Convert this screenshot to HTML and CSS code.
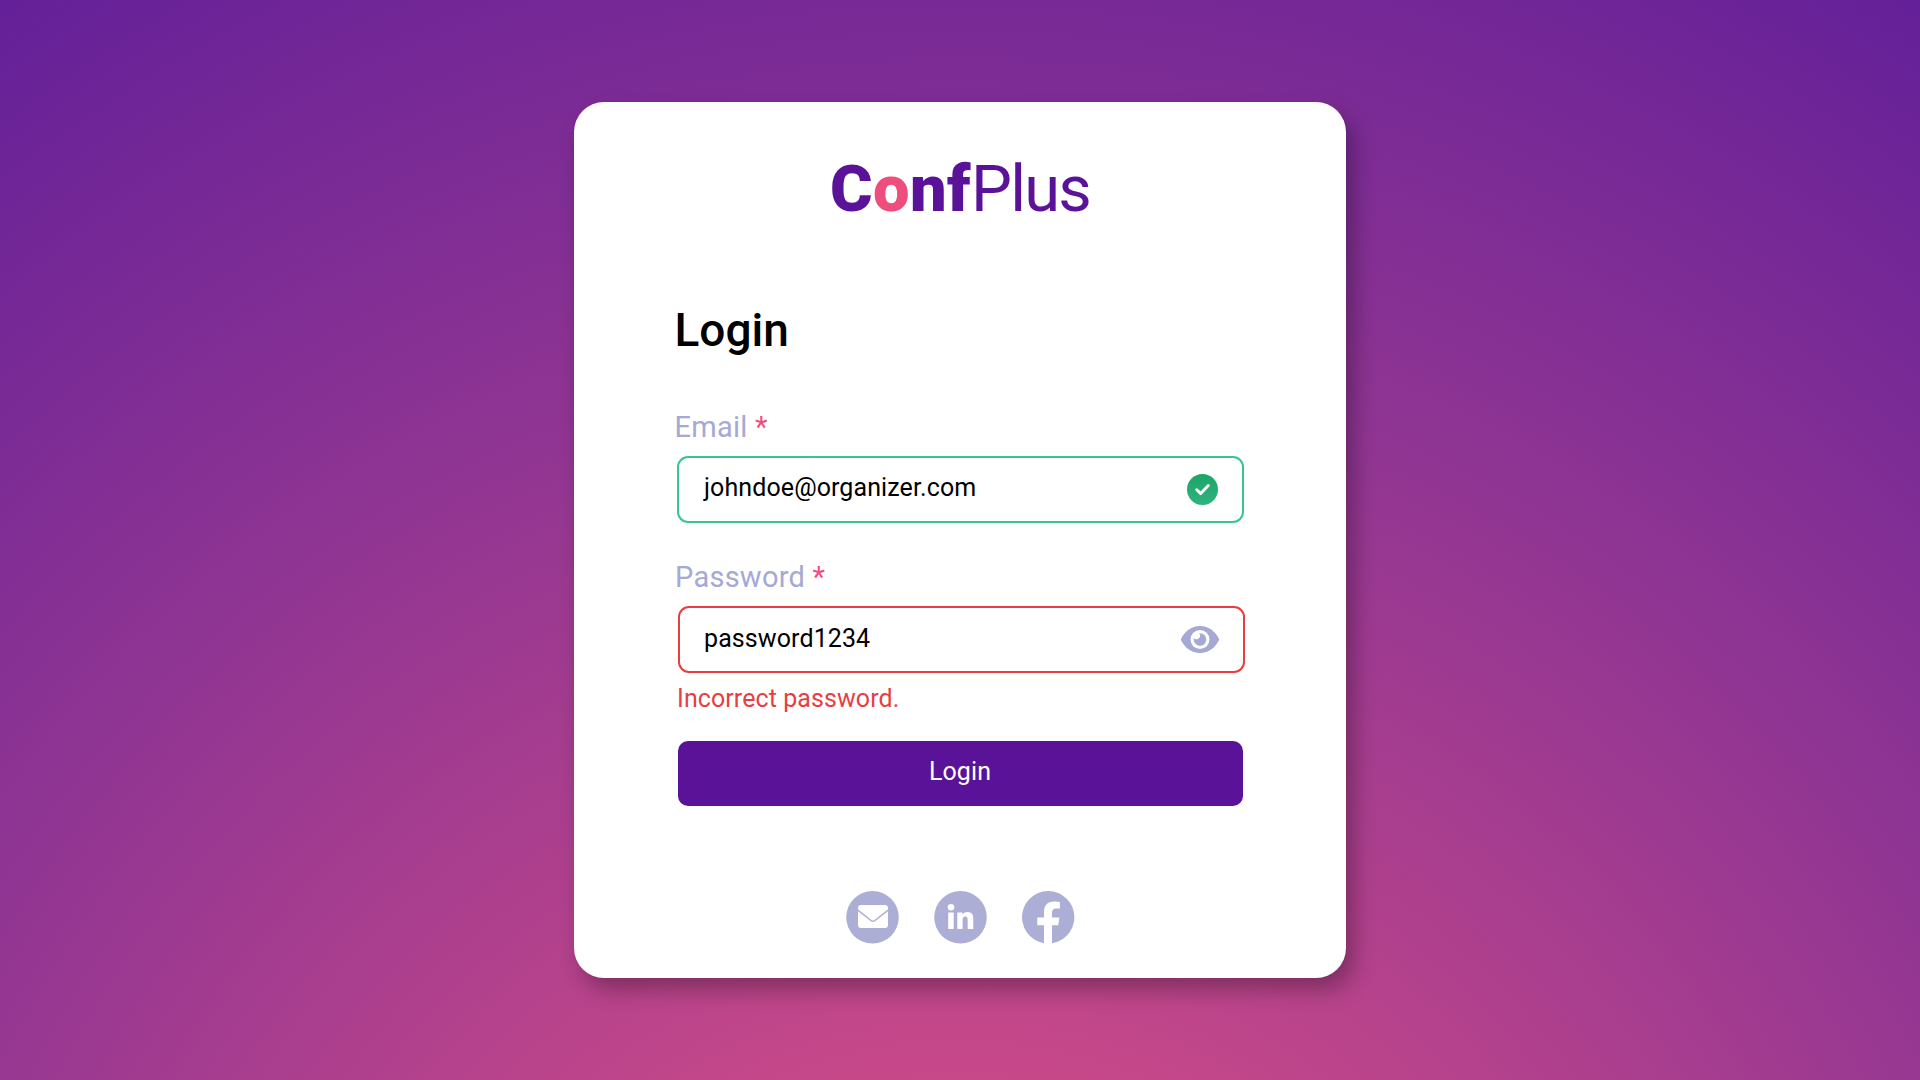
FILE: index.html
```html
<!DOCTYPE html>
<html lang="en">
<head>
<meta charset="utf-8">
<title>ConfPlus Login</title>
<link rel="stylesheet" href="styles.css">
</head>
<body>
<main class="card">
  <div class="logo"><span class="logo-bold">C<span class="logo-accent">o</span>nf</span><span class="logo-light">Plus</span></div>
  <form class="form">
    <h1 class="title">Login</h1>
    <label class="label">Email <span class="required">*</span></label>
    <div class="field field-valid">
      <span class="value value-email">johndoe@organizer.com</span>
      <svg class="icon-check" viewBox="0 0 31 31">
        <defs><linearGradient id="ok" x1="0" y1="0" x2="0" y2="1"><stop offset="0" stop-color="#1ba567"/><stop offset="1" stop-color="#2fb380"/></linearGradient></defs>
        <circle cx="15.5" cy="15.5" r="15.5" fill="url(#ok)"/>
        <path d="M9.700 15.800l4 3.800 7.600-8" fill="none" stroke="#fff" stroke-width="2.900" stroke-linecap="round" stroke-linejoin="round"/>
      </svg>
    </div>
    <label class="label label-password">Password <span class="required">*</span></label>
    <div class="field field-invalid">
      <span class="value value-password">password1234</span>
      <svg class="icon-eye" viewBox="0 0 38 27">
        <path d="M19 0C28 0 34.500 6 37.700 12.300Q38.300 13.500 37.700 14.700C34.500 21 28 27 19 27S3.500 21 .3 14.700Q-.3 13.500 .3 12.300C3.500 6 10 0 19 0Z" fill="#a5a9d3"/>
        <circle cx="19" cy="13.500" r="9.500" fill="#fff"/>
        <path d="M19 7.200a6.300 6.300 0 1 1-6.100 4.900 3.200 3.200 0 0 0 5.200-4.800q.4-.1.900-.1Z" fill="#a5a9d3"/>
      </svg>
    </div>
    <p class="error">Incorrect password.</p>
    <button class="submit" type="button">Login</button>
  </form>
  <nav class="socials">
    <svg class="social" viewBox="0 0 53 53">
      <circle cx="26.500" cy="26.300" r="26.300" fill="#acaed5"/>
      <path d="M12 18.300v-1.300q0-3 3-3h24q3 0 3 3v1.300L28.500 29q-1.500 1-3 0Z" fill="#fff"/>
      <path d="M12 20.200l12.900 10.100q2.100 1.400 4.200 0L42 20.200V34q0 3-3 3H15q-3 0-3-3Z" fill="#fff"/>
    </svg>
    <svg class="social" viewBox="0 0 53 53">
      <circle cx="26.500" cy="26.300" r="26.300" fill="#acaed5"/>
      <circle cx="17" cy="16.300" r="3.300" fill="#fff"/>
      <path d="M14.200 21.500h5.500V38h-5.500ZM23.300 21.500h5.200v2.300c.9-1.600 2.700-2.700 5.100-2.700 4.500 0 5.700 2.900 5.700 7.300V38h-5.600v-8.600c0-2.100-.3-3.900-2.400-3.900s-2.700 1.700-2.700 3.900V38h-5.300Z" fill="#fff"/>
    </svg>
    <svg class="social" viewBox="0 0 53 53">
      <circle cx="26.200" cy="26.300" r="26.200" fill="#acaed5"/>
      <path d="M22 53V34.200h-6.700v-7.700H22v-5.800c0-6.600 3.800-10.300 9.900-10.300 2.900 0 6 .5 6 .5v6.500h-3.400c-3.300 0-4.500 2-4.500 4.200v4.900h7.400l-1.200 7.700H30V53Z" fill="#fff"/>
    </svg>
  </nav>
</main>
</body>
</html>
```
FILE: styles.css
```css
* { box-sizing: border-box; }

body {
  margin: 0;
  height: 1080px;
  padding-top: 102px;
  overflow: hidden;
  font-family: Roboto, "Liberation Sans", sans-serif;
  background: radial-gradient(1938px 2077px at 50% 1599px, #ee5682 0%, #903593 60%, #581a9a 100%);
}

.card {
  width: 772px;
  height: 876px;
  margin: 0 auto;
  padding: 47px 101px 0;
  background: #fff;
  border-radius: 30px;
  box-shadow: 8px 12px 22px rgba(0, 0, 0, 0.3);
}

.logo {
  display: flex;
  padding-left: 155px;
  font-size: 65px;
  line-height: 80px;
  color: #5a1398;
}
.logo-bold { font-weight: 900; letter-spacing: 0.4px; }
.logo-light { font-weight: 400; letter-spacing: -1.8px; }
.logo-accent { color: #ee4e7e; }

.form {
  display: flex;
  flex-direction: column;
  padding-top: 71px;
}

.title {
  margin: 0 0 47px -0.5px;
  font-size: 46px;
  line-height: 60px;
  font-weight: 500;
  color: #000;
}

.label {
  margin: 0 0 9px -0.5px;
  font-size: 29px;
  line-height: 40px;
  letter-spacing: 0.25px;
  color: #a5a9d3;
}
.label-password { margin: 34px 0 9px; }
.required { color: #ee4e7e; }

.field {
  display: flex;
  align-items: center;
  justify-content: space-between;
  width: 567px;
  height: 67px;
  padding: 0 24px;
  border: 2px solid;
  border-radius: 11px;
}
.field-valid { margin-left: 2px; padding-left: 25px; border-color: #36c78f; }
.field-invalid { margin-left: 3px; border-color: #e83e3f; }

.value {
  font-size: 25px;
  line-height: 30px;
  letter-spacing: 0.1px;
  color: #000;
}
.value-email { padding-bottom: 4px; }
.value-password { padding-bottom: 1px; }

.icon-check { width: 31px; height: 31px; }
.icon-eye { width: 38px; height: 27px; }

.error {
  margin: 11px 0 27px 2px;
  font-size: 25px;
  line-height: 30px;
  letter-spacing: 0.08px;
  color: #e83e3f;
}

.submit {
  width: 565px;
  height: 65px;
  margin-left: 3px;
  padding: 0 1px 5px 0;
  border: 0;
  border-radius: 10px;
  background: #5a1398;
  color: #fff;
  font-family: inherit;
  font-size: 25px;
  letter-spacing: 0.1px;
}

.socials {
  display: flex;
  justify-content: center;
  gap: 35px;
  padding-top: 85px;
}
.social { width: 53px; height: 53px; }
```
